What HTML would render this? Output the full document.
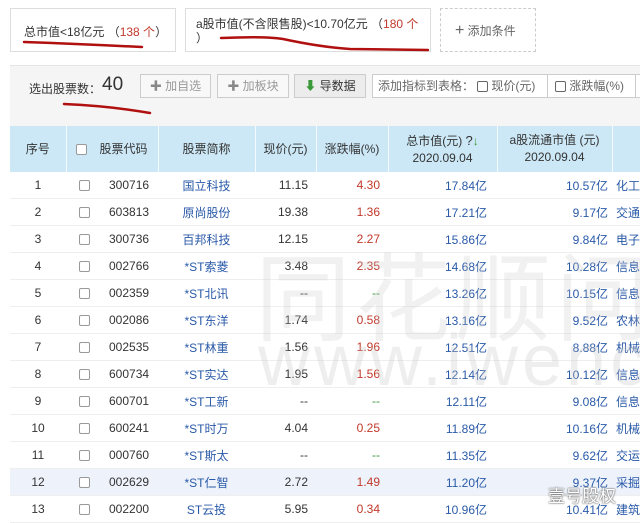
<!DOCTYPE html><html><head><meta charset="utf-8"><style>
body{margin:0;width:640px;height:522px;overflow:hidden;background:#fff;font-family:"Liberation Sans","Noto Sans CJK SC",sans-serif;position:relative;font-size:12px;color:#333}
.a{position:absolute;white-space:nowrap}
.box{position:absolute;border:1px solid #ddd;background:#fff}
.r{color:#c0392b}.b{color:#2a5aa8}.g{color:#3a9a3a}
table{position:absolute;left:10px;top:126px;border-collapse:collapse;table-layout:fixed;width:640px}
td{height:26px;padding:0;text-align:center;font-size:12px;border-bottom:1px solid #eee;white-space:nowrap;overflow:hidden}
th{height:44px;background:#cce8f6;font-weight:normal;font-size:12px;border-right:1px solid #f4fbff;color:#333;line-height:17px}
.cb{display:inline-block;width:9px;height:9px;border:1px solid #999;border-radius:2px;background:#fff;vertical-align:middle}
.btn{position:absolute;top:74px;height:22px;border:1px solid #ccc;background:#f8f8f8;color:#999;font-size:12px;line-height:22px;text-align:center}
</style></head><body>
<div class="box" style="left:10px;top:8px;width:164px;height:42px"><span class="a" style="left:13px;top:14px">总市值&lt;18亿元 （<span class="r">138 个</span>）</span></div>
<div class="box" style="left:185px;top:8px;width:244px;height:42px"><span class="a" style="left:10px;top:6px">a股市值(不含限售股)&lt;10.70亿元 （<span class="r">180 个</span></span><span class="a" style="left:10px;top:20px">）</span></div>
<div class="box" style="left:440px;top:8px;width:94px;height:42px;border:1px dashed #ccc"><span class="a" style="left:14px;top:13px;color:#666"><b style="font-size:16px;font-weight:normal">+</b> 添加条件</span></div>
<div class="a" style="left:10px;top:65px;width:630px;height:61px;background:#f5f5f5;border-top:1px solid #e5e5e5"></div>
<span class="a" style="left:29px;top:80px">选出股票数：</span><span class="a" style="left:102px;top:74px;font-size:19px">40</span>
<div class="btn" style="left:140px;width:69px"><b style="color:#888">✚</b> 加自选</div>
<div class="btn" style="left:217px;width:70px"><b style="color:#888">✚</b> 加板块</div>
<div class="btn" style="left:294px;width:70px;color:#333;background:#ececec"><span class="g">⬇</span> 导数据</div>
<div class="btn" style="left:372px;width:270px;background:#fff;color:#666;text-align:left"><span style="padding-left:5px">添加指标到表格：</span><span class="a" style="left:104px;top:0"><span class="cb" style="border-color:#666"></span> 现价(元)</span><span class="a" style="left:174px;top:-1px;height:24px;border-left:1px solid #ccc"></span><span class="a" style="left:182px;top:0"><span class="cb" style="border-color:#666"></span> 涨跌幅(%)</span><span class="a" style="left:262px;top:-1px;height:24px;border-left:1px solid #ccc"></span></div>
<table>
<colgroup><col style="width:56px"><col style="width:92px"><col style="width:97px"><col style="width:61px"><col style="width:72px"><col style="width:109px"><col style="width:115px"><col style="width:38px"></colgroup>
<tr><th>序号</th><th><span class="cb" style="margin-right:12px"></span>股票代码</th><th>股票简称</th><th>现价(元)</th><th>涨跌幅(%)</th><th>总市值(元) <span style="font-size:13px">?</span><span class="g">↓</span><br>2020.09.04</th><th>a股流通市值 (元)<br>2020.09.04</th><th></th></tr>
<tbody id="tb"></tbody></table>
<div class="a" style="left:255px;top:222px;font-size:96px;color:rgba(200,200,200,.25);letter-spacing:4px">同花顺问</div>
<div class="a" style="left:258px;top:320px;font-size:72px;color:rgba(200,200,200,.3);letter-spacing:4px">www.iwencai</div>
<div class="a" style="left:548px;top:482px;font-size:17px;color:#fff;text-shadow:0 0 2px #666,0 0 1px #333">壹号股权</div>
<svg class="a" style="left:0;top:0" width="640" height="522"><g fill="none" stroke="#b01010" stroke-width="2.5" stroke-linecap="round">
<path d="M24 42 Q80 44 142 47"/><path d="M221 38 Q265 36 283 39 Q320 47 350 49 L428 50"/><path d="M64 104 Q110 106 150 113"/></g></svg>
<script>
var d=[["300716","国立科技","11.15","4.30","17.84亿","10.57亿","化工"],["603813","原尚股份","19.38","1.36","17.21亿","9.17亿","交通"],["300736","百邦科技","12.15","2.27","15.86亿","9.84亿","电子"],["002766","*ST索菱","3.48","2.35","14.68亿","10.28亿","信息"],["002359","*ST北讯","--","--","13.26亿","10.15亿","信息"],["002086","*ST东洋","1.74","0.58","13.16亿","9.52亿","农林"],["002535","*ST林重","1.56","1.96","12.51亿","8.88亿","机械"],["600734","*ST实达","1.95","1.56","12.14亿","10.12亿","信息"],["600701","*ST工新","--","--","12.11亿","9.08亿","信息"],["600241","*ST时万","4.04","0.25","11.89亿","10.16亿","机械"],["000760","*ST斯太","--","--","11.35亿","9.62亿","交运"],["002629","*ST仁智","2.72","1.49","11.20亿","9.37亿","采掘"],["002200","ST云投","5.95","0.34","10.96亿","10.41亿","建筑"]];
var h="";d.forEach(function(r,i){var bg=i==11?' style="background:#eef3fb"':'';var c=r[3]=="--"?"g":"r";
h+='<tr'+bg+'><td>'+(i+1)+'</td><td style="text-align:left;padding-left:13px"><span class="cb" style="margin-right:19px"></span>'+r[0]+'</td><td class="b">'+r[1]+'</td><td style="text-align:right;padding-right:8px">'+r[2]+'</td><td class="'+c+'" style="text-align:right;padding-right:8px">'+r[3]+'</td><td class="b" style="text-align:right;padding-right:10px">'+r[4]+'</td><td class="b" style="text-align:right;padding-right:4px">'+r[5]+'</td><td class="b" style="text-align:left;padding-left:4px">'+r[6]+'</td></tr>';});
document.getElementById("tb").innerHTML=h;
</script>
</body></html>
